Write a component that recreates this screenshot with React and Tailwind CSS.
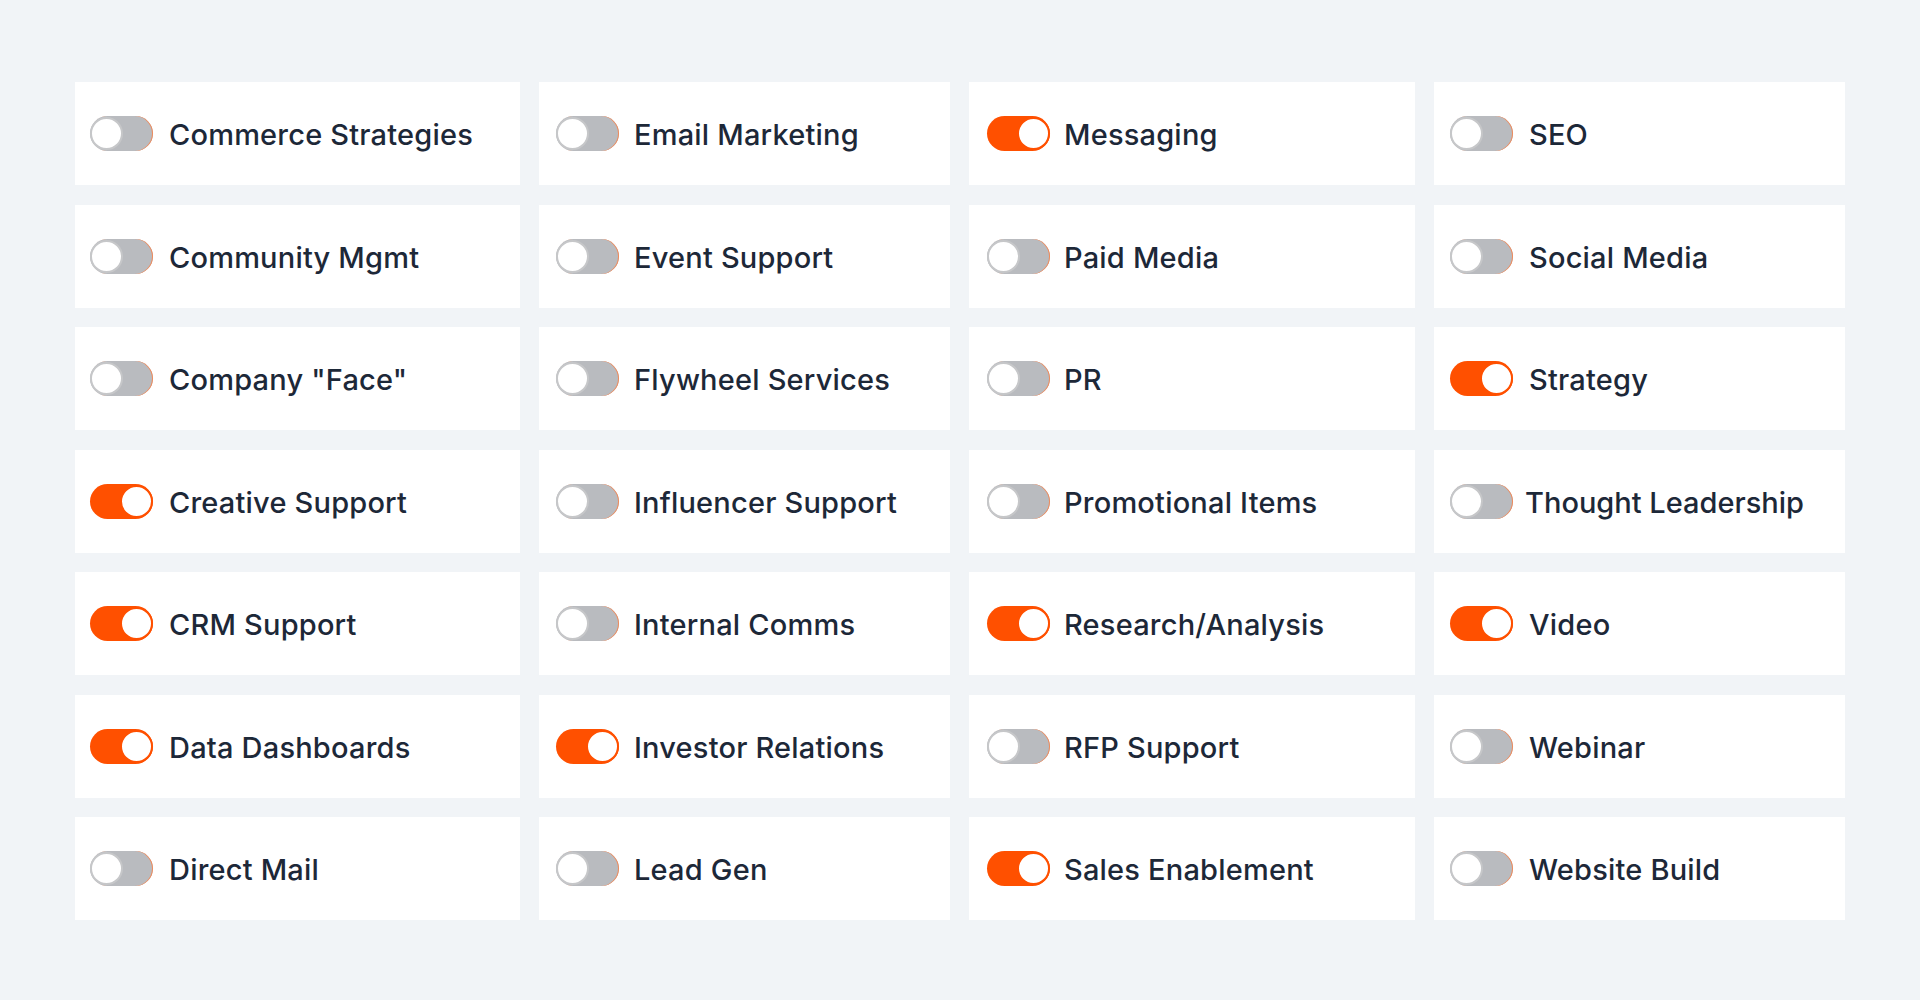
import React from "react";

const items = [
  ["Commerce Strategies", false], ["Email Marketing", false], ["Messaging", true], ["SEO", false],
  ["Community Mgmt", false], ["Event Support", false], ["Paid Media", false], ["Social Media", false],
  ['Company "Face"', false], ["Flywheel Services", false], ["PR", false], ["Strategy", true],
  ["Creative Support", true], ["Influencer Support", false], ["Promotional Items", false], ["Thought Leadership", false],
  ["CRM Support", true], ["Internal Comms", false], ["Research/Analysis", true], ["Video", true],
  ["Data Dashboards", true], ["Investor Relations", true], ["RFP Support", false], ["Webinar", false],
  ["Direct Mail", false], ["Lead Gen", false], ["Sales Enablement", true], ["Website Build", false],
];

const cellClasses = [
  "flex h-[103px] items-center gap-[16px] bg-white pl-[15px]",
  "flex h-[103px] items-center gap-[15px] bg-white pl-[17px]",
  "flex h-[103px] items-center gap-[14px] bg-white pl-[18px]",
  "flex h-[103px] items-center gap-[16px] bg-white pl-[16px]",
];

function Toggle({ on }) {
  return (
    <div
      className={
        on
          ? "relative h-[35px] w-[63px] shrink-0 rounded-full bg-[#ff5000]"
          : "relative h-[35px] w-[63px] shrink-0 rounded-full bg-[#b9bbbf] shadow-[inset_-1px_0_0_#f08a5a]"
      }
    >
      <div
        className={
          on
            ? "absolute right-0 top-[1px] h-[33px] w-[33px] rounded-full border-2 border-[#ff5000] bg-white"
            : "absolute left-0 top-[1px] h-[33px] w-[33px] rounded-full border-2 border-[#c6c7c9] bg-white"
        }
      />
    </div>
  );
}

export default function App() {
  return (
    <div className="min-h-[1000px] w-full bg-[#f1f4f7] pl-[75px] pt-[82px]">
      <div className="grid grid-cols-[445px_411px_446px_411px] gap-x-[19px] gap-y-[19.5px]">
        {items.map(([label, on], i) => (
          <div key={label} className={cellClasses[i % 4]}>
            <Toggle on={on} />
            <span
              className={
                label === "Thought Leadership"
                  ? "-ml-[4px] whitespace-nowrap pt-[3px] text-[29px] font-medium tracking-[0px] text-[#1d2838]"
                  : "whitespace-nowrap pt-[3px] text-[29px] font-medium tracking-[0.2px] text-[#1d2838]"
              }
              style={{ fontFamily: "Inter, 'Noto Sans', sans-serif" }}
            >
              {label}
            </span>
          </div>
        ))}
      </div>
    </div>
  );
}
